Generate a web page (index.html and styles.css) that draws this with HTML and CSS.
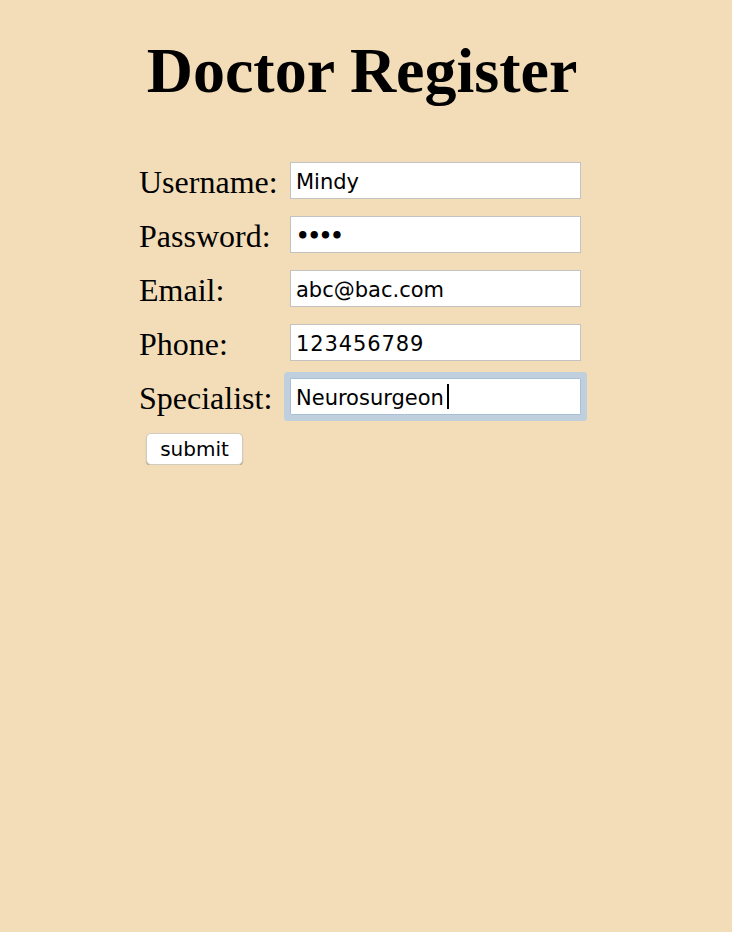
FILE: index.html
```html
<!DOCTYPE html>
<html lang="en">
<head>
<meta charset="utf-8">
<title>Doctor Register</title>
<link rel="stylesheet" href="styles.css">
</head>
<body>
<main class="page">
  <h1 class="title">Doctor Register</h1>
  <form class="reg-form">
    <div class="fields">
      <label class="field-label" for="username">Username:</label>
      <input class="field-input" id="username" type="text" value="Mindy">
      <label class="field-label" for="password">Password:</label>
      <input class="field-input password" id="password" type="password" value="abcd">
      <label class="field-label" for="email">Email:</label>
      <input class="field-input" id="email" type="text" value="abc@bac.com">
      <label class="field-label" for="phone">Phone:</label>
      <input class="field-input phone" id="phone" type="text" value="123456789">
      <label class="field-label" for="specialist">Specialist:</label>
      <div class="input-wrap">
        <input class="field-input focused" id="specialist" type="text" value="Neurosurgeon">
        <span class="caret"></span>
      </div>
    </div>
    <div class="actions">
      <button class="submit-btn" type="button">submit</button>
    </div>
  </form>
</main>
</body>
</html>
```

FILE: styles.css
```css
html {
  background: #f2ddb8;
}

body {
  margin: 0;
  padding: 0 8px 0 0;
  background: #f2ddb8;
  color: #000;
  font-family: "Liberation Serif", "Times New Roman", serif;
}

.page {
  display: flex;
  flex-direction: column;
  align-items: center;
}

.title {
  margin: 35px 0 0;
  font-size: 64px;
  line-height: 72px;
  font-weight: bold;
  letter-spacing: 0;
}

.reg-form {
  width: 446px;
  margin-top: 55px;
}

.fields {
  display: grid;
  grid-template-columns: 151px 295px;
  row-gap: 17px;
}

.field-label {
  height: 37px;
  box-sizing: border-box;
  padding-top: 2px;
  font-size: 32px;
  line-height: 37px;
  white-space: nowrap;
}

.field-input {
  width: 291px;
  height: 37px;
  box-sizing: border-box;
  margin: 0;
  padding: 2px 5px 0;
  border: 1px solid #c3c3c3;
  border-radius: 0;
  background: #fff;
  font-family: "DejaVu Sans", "Liberation Sans", sans-serif;
  font-size: 21px;
  color: #000;
  outline: none;
}

.password {
  letter-spacing: -2px;
  font-weight: bold;
}

.phone {
  letter-spacing: 0.9px;
}

.input-wrap {
  position: relative;
  width: 291px;
  height: 37px;
}

.focused {
  border-color: #a9bfd6;
  border-radius: 1px;
  box-shadow: 0 0 0 6px #bfcfdd;
}

.caret {
  position: absolute;
  left: 157px;
  top: 6px;
  width: 2px;
  height: 25px;
  background: #000;
}

.actions {
  display: flex;
  margin-top: 18px;
  padding-left: 7px;
}

.submit-btn {
  width: 97px;
  height: 32px;
  margin: 0;
  padding: 0 0 1px;
  border: 1px solid #d2ccc0;
  border-radius: 5px;
  background: #fff;
  box-shadow: 0 1px 1px rgba(0, 0, 0, 0.28);
  font-family: "DejaVu Sans", "Liberation Sans", sans-serif;
  font-size: 20px;
  color: #000;
}
```
